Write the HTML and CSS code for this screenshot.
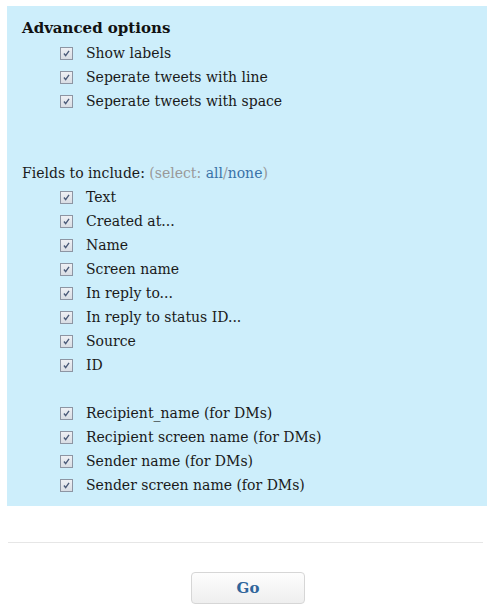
FILE: index.html
```html
<!DOCTYPE html>
<html>
<head>
    <title>Export options</title>
    <link rel="stylesheet" href="styles.css">
</head>
<body>
    <div class="options">
        <h3 class="title">Advanced options</h3>
        <ul class="checks">
            <li><span class="box"><svg viewBox="0 0 13 13"><path d="M3.5 6.5 L5.5 9 L9.5 3.5" /></svg></span>Show labels</li>
            <li><span class="box"><svg viewBox="0 0 13 13"><path d="M3.5 6.5 L5.5 9 L9.5 3.5" /></svg></span>Seperate tweets with line</li>
            <li><span class="box"><svg viewBox="0 0 13 13"><path d="M3.5 6.5 L5.5 9 L9.5 3.5" /></svg></span>Seperate tweets with space</li>
        </ul>

        <p class="fields">Fields to include: <span class="select">(select: <a href="#">all</a>/<a href="#">none</a>)</span></p>
        <ul class="checks">
            <li><span class="box"><svg viewBox="0 0 13 13"><path d="M3.5 6.5 L5.5 9 L9.5 3.5" /></svg></span>Text</li>
            <li><span class="box"><svg viewBox="0 0 13 13"><path d="M3.5 6.5 L5.5 9 L9.5 3.5" /></svg></span>Created at...</li>
            <li><span class="box"><svg viewBox="0 0 13 13"><path d="M3.5 6.5 L5.5 9 L9.5 3.5" /></svg></span>Name</li>
            <li><span class="box"><svg viewBox="0 0 13 13"><path d="M3.5 6.5 L5.5 9 L9.5 3.5" /></svg></span>Screen name</li>
            <li><span class="box"><svg viewBox="0 0 13 13"><path d="M3.5 6.5 L5.5 9 L9.5 3.5" /></svg></span>In reply to...</li>
            <li><span class="box"><svg viewBox="0 0 13 13"><path d="M3.5 6.5 L5.5 9 L9.5 3.5" /></svg></span>In reply to status ID...</li>
            <li><span class="box"><svg viewBox="0 0 13 13"><path d="M3.5 6.5 L5.5 9 L9.5 3.5" /></svg></span>Source</li>
            <li><span class="box"><svg viewBox="0 0 13 13"><path d="M3.5 6.5 L5.5 9 L9.5 3.5" /></svg></span>ID</li>
            <li class="spacer"></li>
            <li><span class="box"><svg viewBox="0 0 13 13"><path d="M3.5 6.5 L5.5 9 L9.5 3.5" /></svg></span>Recipient_name (for DMs)</li>
            <li><span class="box"><svg viewBox="0 0 13 13"><path d="M3.5 6.5 L5.5 9 L9.5 3.5" /></svg></span>Recipient screen name (for DMs)</li>
            <li><span class="box"><svg viewBox="0 0 13 13"><path d="M3.5 6.5 L5.5 9 L9.5 3.5" /></svg></span>Sender name (for DMs)</li>
            <li><span class="box"><svg viewBox="0 0 13 13"><path d="M3.5 6.5 L5.5 9 L9.5 3.5" /></svg></span>Sender screen name (for DMs)</li>
        </ul>
    </div>
    <hr class="rule">
    <div class="actions">
        <button class="go">Go</button>
    </div>
</body>
</html>
```

FILE: styles.css
```css
body {
    margin: 0;
    padding: 6px 5px 0 7px;
    font-family: "DejaVu Serif", Georgia, serif;
    font-size: 14px;
    color: #1a1a1a;
    background-color: #ffffff;
}

.options {
    background-color: #cdeefb;
    padding: 12px 15px 10px 15px;
    height: 478px;
}

.title {
    margin: 0 0 3px 0;
    font-size: 15px;
    font-weight: bold;
    line-height: 20px;
    color: #111;
}

.checks {
    list-style: none;
    margin: 0;
    padding: 0 0 0 38px;
}

.checks li {
    display: flex;
    align-items: center;
    height: 24px;
}

.checks li.spacer {
    height: 24px;
}

.box {
    width: 11px;
    height: 11px;
    border: 1px solid #8d95a3;
    background: linear-gradient(#eef0f4, #d9dde4);
    margin-right: 13px;
    display: flex;
}

.box svg {
    width: 11px;
    height: 11px;
}

.box path {
    fill: none;
    stroke: #4a5a78;
    stroke-width: 1.6;
}

.fields {
    margin: 48px 0 0 0;
    line-height: 24px;
}

.select {
    color: #999;
}

.select a {
    color: #3a73a8;
    text-decoration: none;
}

.rule {
    border: none;
    border-top: 1px solid #e6e6e6;
    margin: 36px 4px 0 1px;
}

.actions {
    display: flex;
    justify-content: center;
    padding-top: 29px;
}

.go {
    width: 114px;
    height: 32px;
    margin-left: 2px;
    border: 1px solid #d6d6d6;
    border-radius: 4px;
    background: linear-gradient(#fdfdfd, #eeeeee);
    font-family: Georgia, "DejaVu Serif", serif;
    font-size: 15px;
    font-weight: bold;
    color: #2f659b;
    cursor: pointer;
}
```
